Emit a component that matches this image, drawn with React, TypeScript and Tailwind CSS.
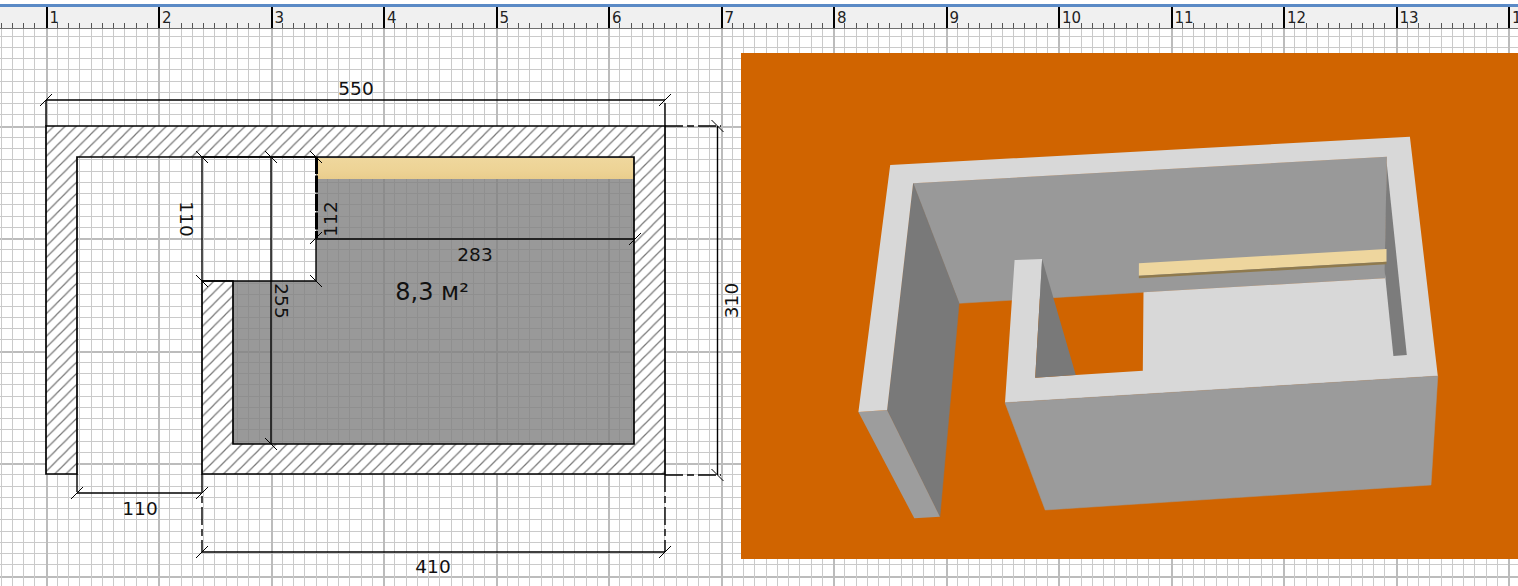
const rulerLabels = [1, 2, 3, 4, 5, 6, 7, 8, 9, 10, 11, 12, 13, 14];

const STEP = 11.25;

// grid index -> pixel, the plan is anchored on the wall corner at 46,126
const gridXs = Array.from({ length: 140 }, (_, i) => i - 4);
const gridYs = Array.from({ length: 60 }, (_, i) => i - 10);
const gx = (k: number) => Math.floor(46 + k * STEP);
const gy = (k: number) => Math.floor(126 + k * STEP);

const dimText = "fill-[#111] font-['DejaVu_Sans',sans-serif] text-[18.5px]";

function Tick({ x, y, flip }: { x: number; y: number; flip?: boolean }) {
  return flip ? (
    <line x1={x - 6} y1={y - 6} x2={x + 6} y2={y + 6} stroke="#000" strokeWidth="1" />
  ) : (
    <line x1={x - 6} y1={y + 6} x2={x + 6} y2={y - 6} stroke="#000" strokeWidth="1" />
  );
}

function Line({ x1, y1, x2, y2, dashed }: { x1: number; y1: number; x2: number; y2: number; dashed?: boolean }) {
  return (
    <line
      x1={x1}
      y1={y1}
      x2={x2}
      y2={y2}
      stroke="#000"
      strokeWidth="1.4"
      strokeDasharray={dashed ? "18 4 7 4" : undefined}
    />
  );
}

function Ruler() {
  return (
    <div className="relative flex h-[22px] shrink-0 border-b border-[#707070] bg-[#f0f0f0] pl-[45.5px]">
      <svg className="absolute bottom-0 left-0 h-[5px] w-[1518px]" viewBox="0 0 1518 5">
        {gridXs.map((k) => (
          <line key={k} x1={gx(k) + 0.5} y1="0" x2={gx(k) + 0.5} y2="5" stroke="#555" shapeRendering="crispEdges" />
        ))}
      </svg>
      {rulerLabels.map((n) => (
        <div
          key={n}
          className="relative w-[112.5px] shrink-0 border-l-2 border-black pl-[2px] pt-[2px] font-['DejaVu_Sans',sans-serif] text-[15px] leading-[18px] text-[#222]"
        >
          {n}
        </div>
      ))}
    </div>
  );
}

function PlanDrawing() {
  return (
    <svg className="absolute left-0 top-0 h-[557px] w-[1518px]" viewBox="0 29 1518 557">
      <defs>
        <pattern id="hatch" width="11.25" height="11.25" patternUnits="userSpaceOnUse">
          <path d="M-1 12.25 L12.25 -1" stroke="#777" strokeWidth="1.2" />
          <path d="M-3 3 L3 -3 M8.25 14.25 L14.25 8.25" stroke="#777" strokeWidth="1.2" />
        </pattern>
        <linearGradient id="wood" x1="0" y1="0" x2="0" y2="1">
          <stop offset="0" stopColor="#efd79d" />
          <stop offset="0.6" stopColor="#edd395" />
          <stop offset="1" stopColor="#e9cd8c" />
        </linearGradient>
      </defs>

      {gridYs.map((k) => (
        <line
          key={k}
          x1="0"
          x2="1518"
          y1={gy(k) + 0.5}
          y2={gy(k) + 0.5}
          stroke={k % 10 === 0 ? "#bcbcbc" : "#cacaca"}
          strokeWidth={k % 10 === 0 ? 2 : 1}
          shapeRendering="crispEdges"
        />
      ))}
      {gridXs.map((k) => (
        <line
          key={k}
          y1="29"
          y2="586"
          x1={gx(k) + 0.5}
          x2={gx(k) + 0.5}
          stroke={k % 10 === 0 ? "#bcbcbc" : "#cacaca"}
          strokeWidth={k % 10 === 0 ? 2 : 1}
          shapeRendering="crispEdges"
        />
      ))}

      {/* room floor, grid shows through */}
      <path d="M316 157 H634 V444 H233 V281 H316 Z" fill="#808080" fillOpacity="0.8" />
      <rect x="317" y="158" width="317" height="21" fill="url(#wood)" />

      {/* walls */}
      <path d="M46 126 H665 V474 H202 V281 H233 V444 H634 V157 H77 V474 H46 Z" fill="#fff" />
      <path
        d="M46 126 H665 V474 H202 V281 H233 V444 H634 V157 H77 V474 H46 Z"
        fill="url(#hatch)"
        stroke="#000"
        strokeWidth="1.7"
      />

      {/* dimensions */}
      <Line x1={46} y1={100} x2={665} y2={100} />
      <Line x1={46} y1={100} x2={46} y2={126} />
      <Line x1={665} y1={103} x2={665} y2={126} />
      <Tick x={46} y={100} />
      <Tick x={665} y={100} />
      <text x={356} y={95} textAnchor="middle" className={dimText}>550</text>

      <Line x1={665} y1={126} x2={721} y2={126} dashed />
      <Line x1={665} y1={475} x2={721} y2={475} dashed />
      <Line x1={717.5} y1={126} x2={717.5} y2={475} />
      <Tick x={717.5} y={126} flip />
      <Tick x={717.5} y={475} flip />
      <text transform="translate(738 300.5) rotate(-90)" textAnchor="middle" className={dimText}>310</text>

      <Line x1={202} y1={157} x2={316} y2={157} />
      <Line x1={202} y1={157} x2={202} y2={281} />
      <Line x1={202} y1={281} x2={316} y2={281} />
      <Tick x={202} y={157} flip />
      <Tick x={202} y={281} flip />
      <text transform="translate(180 219) rotate(90)" textAnchor="middle" className={dimText}>110</text>

      <Line x1={271} y1={157} x2={271} y2={444} />
      <Tick x={271} y={157} flip />
      <Tick x={271} y={444} flip />
      <text transform="translate(275 301) rotate(90)" textAnchor="middle" className={dimText}>255</text>

      <line x1={316.5} y1={157} x2={316.5} y2={238} stroke="#000" strokeWidth="3" strokeDasharray="17 1.5" />
      <Line x1={316} y1={238} x2={316} y2={281} />
      <Tick x={316} y={157} flip />
      <Tick x={316} y={281} flip />
      <Tick x={316} y={238} />
      <text transform="translate(337 219) rotate(-90)" textAnchor="middle" className={dimText}>112</text>

      <Line x1={316} y1={239} x2={635} y2={239} />
      <Tick x={635} y={239} />
      <text x={475} y={261} textAnchor="middle" className={dimText}>283</text>

      <text x={432} y={300} textAnchor="middle" className="fill-[#111] font-['DejaVu_Sans',sans-serif] text-[24px]">8,3 м²</text>

      <Line x1={77} y1={474} x2={77} y2={494} dashed />
      <Line x1={202} y1={474} x2={202} y2={552} dashed />
      <Line x1={77} y1={493} x2={202} y2={493} />
      <Tick x={77} y={493} />
      <Tick x={202} y={493} />
      <text x={140} y={515} textAnchor="middle" className={dimText}>110</text>

      <Line x1={665} y1={474} x2={665} y2={552} dashed />
      <Line x1={202} y1={552} x2={665} y2={552} />
      <Tick x={202} y={552} />
      <Tick x={665} y={552} />
      <text x={433} y={573} textAnchor="middle" className={dimText}>410</text>
    </svg>
  );
}

function Preview3D() {
  return (
    <div className="relative ml-[741px] mt-[24px] h-[506px] w-[777px] bg-[#d06400]">
      <svg className="h-full w-full" viewBox="741 53 777 506">
        {/* back wall */}
        <polygon points="913.1,183.3 1386.9,156.7 1385,278.3 1143.5,292.3 959.1,303.3" fill="#999999" stroke="#999999" strokeWidth="0.5" />
        {/* left wall inner face and end */}
        <polygon points="913.1,183.3 959.1,303.3 939.9,516.7 887.1,410" fill="#797979" stroke="#797979" strokeWidth="0.5" />
        <polygon points="858.4,412 887.1,410 939.9,516.7 914.3,518.3" fill="#9d9d9d" />
        {/* wall tops and floor */}
        <polygon
          points="890.2,165 1409.9,136.7 1437.8,376 1005,402.7 1014.6,260 1042.1,259 1035.2,377.7 1075.8,375 1142.8,370.7 1143.5,292.3 1385,278.3 1386.9,156.7 913.1,183.3 887.1,410 858.4,412"
          fill="#d8d8d8"
        />
        {/* stub wall and right wall inner faces */}
        <polygon points="1042.1,259 1075.8,375 1035.2,377.7" fill="#797979" />
        <polygon points="1386.7,163 1406.8,355 1393.4,356 1384.6,270" fill="#7c7c7c" />
        {/* shelf */}
        <polygon points="1138.9,263.3 1386.5,249 1386.5,261.7 1138.9,275.7" fill="#eed69e" />
        <polygon points="1138.9,275.7 1386.5,261.7 1386.5,264.3 1138.9,278.3" fill="#8f7a4e" />
        {/* front wall */}
        <polygon points="1005,402.7 1437.8,376 1431,485 1045.2,510" fill="#9b9b9b" stroke="#9b9b9b" strokeWidth="0.5" />
      </svg>
    </div>
  );
}

export default function App() {
  return (
    <div className="flex h-[586px] w-[1518px] flex-col overflow-hidden bg-white">
      <div className="h-1 shrink-0 bg-white" />
      <div className="h-[3px] shrink-0 bg-[#5a8ac6]" />
      <Ruler />
      <div className="relative flex-1">
        <PlanDrawing />
        <Preview3D />
      </div>
    </div>
  );
}
